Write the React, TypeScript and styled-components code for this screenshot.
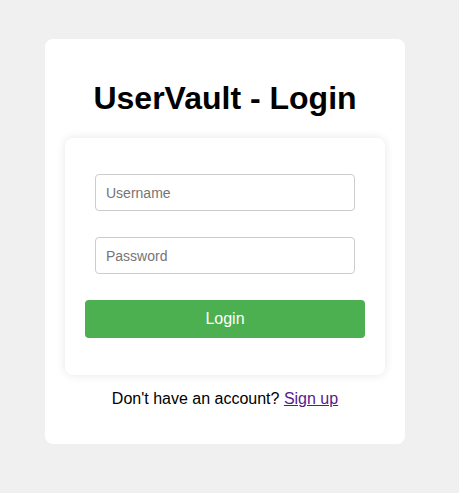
import styled, { createGlobalStyle } from "styled-components";

const GlobalStyle = createGlobalStyle`
  body {
    margin: 0;
    background-color: #f0f0f0;
    font-family: "Liberation Sans", Arial, sans-serif;
  }
`;

const Page = styled.div`
  padding: 39px 0 0 45px;
`;

const Card = styled.div`
  width: 360px;
  box-sizing: border-box;
  padding: 20px 20px 20px;
  border-radius: 8px;
  background-color: #fff;
  text-align: center;
`;

const Title = styled.h1`
  margin: 21px 0 21px;
  font-size: 32px;
  font-weight: bold;
  color: #000;
`;

const Form = styled.form`
  display: flex;
  flex-direction: column;
  align-items: center;
  gap: 26px;
  padding: 36px 20px 37px;
  border-radius: 8px;
  background-color: #fff;
  box-shadow: 0 0 10px rgba(0, 0, 0, 0.1);
`;

const Input = styled.input`
  width: 260px;
  height: 37px;
  box-sizing: border-box;
  padding: 0 10px;
  border: 1px solid #ccc;
  border-radius: 4px;
  font-family: inherit;
  font-size: 14px;
  color: #333;
  outline: none;

  &::placeholder {
    color: #757575;
  }
`;

const Button = styled.button`
  width: 100%;
  height: 38px;
  border: none;
  border-radius: 4px;
  background-color: #4caf50;
  color: #fff;
  font-family: inherit;
  font-size: 16px;
  cursor: pointer;
`;

const Footer = styled.p`
  margin: 15px 0 16px;
  font-size: 16px;
  color: #000;

  a {
    color: #551a8b;
  }
`;

function App() {
  return (
    <Page>
      <GlobalStyle />
      <Card>
        <Title>UserVault - Login</Title>
        <Form onSubmit={(e) => e.preventDefault()}>
          <Input type="text" placeholder="Username" />
          <Input type="password" placeholder="Password" />
          <Button type="submit">Login</Button>
        </Form>
        <Footer>
          Don't have an account? <a href="#signup">Sign up</a>
        </Footer>
      </Card>
    </Page>
  );
}

export default App;
